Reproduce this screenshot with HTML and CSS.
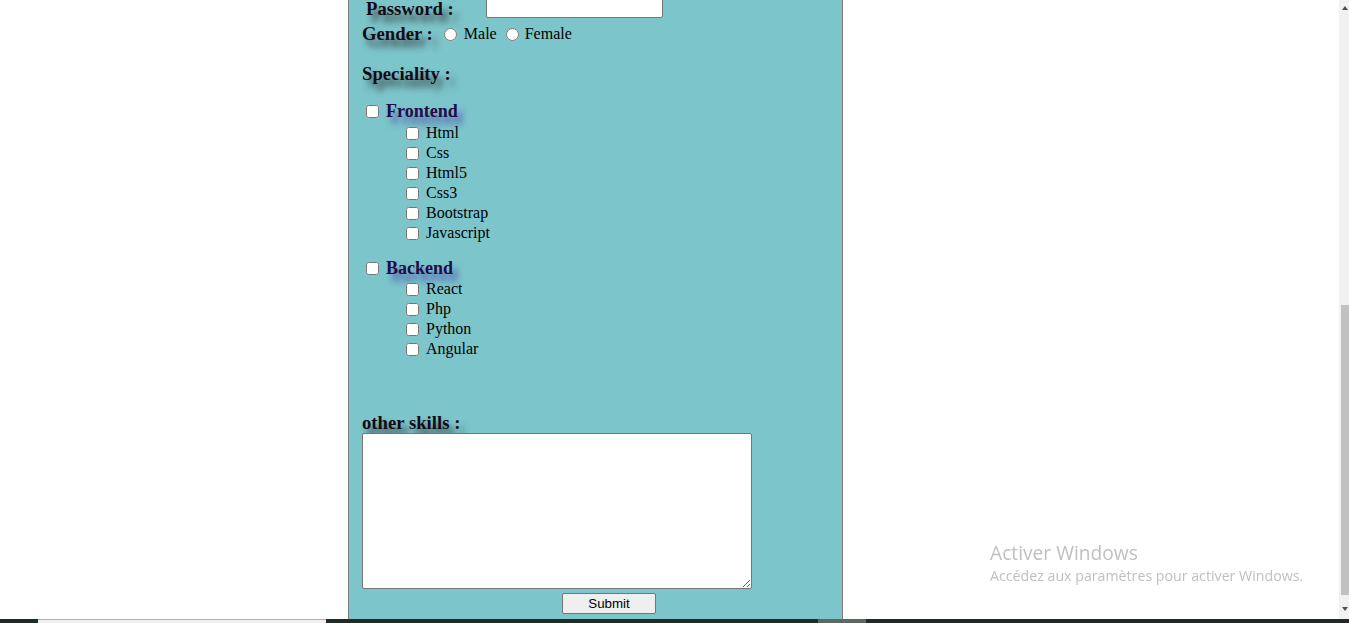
FILE: index.html
```html
<!DOCTYPE html>
<html lang="fr">
<head>
<meta charset="utf-8">
<title>Formulaire</title>
<link rel="stylesheet" href="styles.css">
</head>
<body>
<main class="page">
  <form class="form-box">
    <div class="row row-password">
      <label class="lbl lbl-pass">Password :</label>
      <input class="pass-input" type="password">
    </div>
    <div class="row row-gender">
      <span class="lbl">Gender :</span>
      <input class="radio radio-male" type="radio" name="g"><span class="opt">Male</span>
      <input class="radio radio-female" type="radio" name="g"><span class="opt">Female</span>
    </div>
    <div class="row row-spec"><span class="lbl">Speciality :</span></div>

    <div class="row group-head group-front">
      <input class="cb" type="checkbox"><span class="group-lbl">Frontend</span>
    </div>
    <div class="sub-list sub-front">
      <div class="row sub"><input class="cb" type="checkbox"><span class="opt">Html</span></div>
      <div class="row sub"><input class="cb" type="checkbox"><span class="opt">Css</span></div>
      <div class="row sub"><input class="cb" type="checkbox"><span class="opt">Html5</span></div>
      <div class="row sub"><input class="cb" type="checkbox"><span class="opt">Css3</span></div>
      <div class="row sub"><input class="cb" type="checkbox"><span class="opt">Bootstrap</span></div>
      <div class="row sub"><input class="cb" type="checkbox"><span class="opt">Javascript</span></div>
    </div>

    <div class="row group-head group-back">
      <input class="cb" type="checkbox"><span class="group-lbl">Backend</span>
    </div>
    <div class="sub-list sub-back">
      <div class="row sub"><input class="cb" type="checkbox"><span class="opt">React</span></div>
      <div class="row sub"><input class="cb" type="checkbox"><span class="opt">Php</span></div>
      <div class="row sub"><input class="cb" type="checkbox"><span class="opt">Python</span></div>
      <div class="row sub"><input class="cb" type="checkbox"><span class="opt">Angular</span></div>
    </div>

    <div class="row row-skills"><span class="lbl">other skills :</span></div>
    <textarea class="skills"></textarea>
    <div class="submit-row"><button type="button" class="submit">Submit</button></div>
  </form>
</main>

<div class="scrollbar">
  <span class="arrow arrow-up"></span>
  <span class="thumb"></span>
  <span class="arrow arrow-down"></span>
</div>

<div class="watermark">
  <div class="wm-title">Activer Windows</div>
  <div class="wm-sub">Accédez aux paramètres pour activer Windows.</div>
</div>

<div class="taskbar">
  <span class="tb-light"></span>
  <span class="tb-mid"></span>
</div>
</body>
</html>
```

FILE: styles.css
```css
html, body {
  margin: 0;
  padding: 0;
  height: 100%;
  overflow: hidden;
  background: #ffffff;
}

body {
  font-family: "Liberation Serif", "Times New Roman", serif;
  font-size: 16px;
  color: #000;
}

.page {
  width: 1339px;
}

.form-box {
  margin: -3px 0 0 348px;
  width: 480px;
  height: 640px;
  padding: 0 0 0 13px;
  background: #7cc5cb;
  border-left: 1px solid #7a7a7a;
  border-right: 1px solid #7a7a7a;
  display: flex;
  flex-direction: column;
}

.row {
  display: flex;
  align-items: center;
  height: 20px;
}

.lbl {
  font-weight: bold;
  font-size: 18.72px;
  color: #140a14;
  text-shadow: 5px 7px 6px rgba(50, 50, 50, 0.85);
  white-space: nowrap;
}

.row-password {
  height: 21px;
}

.lbl-pass {
  margin-left: 4px;
  padding-top: 2px;
  width: 120px;
}

.pass-input {
  box-sizing: border-box;
  width: 177px;
  height: 21px;
  margin: 0;
  padding: 1px 2px;
  border: 1px solid #767676;
  border-radius: 2px;
  background: #fff;
}

.row-gender {
  margin-top: 6px;
}

.radio {
  width: 13px;
  height: 13px;
  margin: 0;
}

.radio-male {
  margin-left: 11px;
  margin-right: 7px;
}

.radio-female {
  margin-left: 9px;
  margin-right: 6px;
}

.opt {
  font-size: 16px;
  color: #000;
}

.row-spec {
  margin-top: 20px;
}

.cb {
  width: 13px;
  height: 13px;
  margin: 0 7px 0 0;
}

.group-head {
  padding-left: 4px;
}

.group-front {
  margin-top: 17px;
}

.group-back {
  margin-top: 15px;
}

.group-lbl {
  font-weight: bold;
  font-size: 18px;
  color: #240a48;
  text-shadow: 5px 7px 6px rgba(80, 80, 170, 0.85);
}

.sub-list {
  display: flex;
  flex-direction: column;
}

.sub-front {
  margin-top: 2px;
}

.sub-back {
  margin-top: 1px;
}

.sub {
  padding-left: 44px;
}

.row-skills {
  margin-top: 54px;
}

.skills {
  box-sizing: border-box;
  display: block;
  width: 390px;
  height: 156px;
  margin: 0;
  border: 1px solid #767676;
  border-radius: 2px;
  background: #fff;
  resize: both;
}

.submit-row {
  display: flex;
  padding-left: 200px;
  margin-top: 4px;
}

.submit {
  box-sizing: border-box;
  width: 94px;
  height: 21px;
  padding: 0;
  font-family: "Liberation Sans", Arial, sans-serif;
  font-size: 13.33px;
  color: #000;
  background: #efefef;
  border: 1px solid #767676;
  border-radius: 2px;
}

/* fake window scrollbar */
.scrollbar {
  position: fixed;
  top: 0;
  right: 0;
  width: 10px;
  height: 619px;
  background: #f1f1f1;
}

.thumb {
  position: absolute;
  left: 2px;
  right: 0;
  top: 305px;
  height: 290px;
  background: #c1c1c1;
}

.arrow {
  position: absolute;
  left: 3px;
  width: 0;
  height: 0;
  border-left: 3px solid transparent;
  border-right: 3px solid transparent;
}

.arrow-up {
  top: 6px;
  border-bottom: 4px solid #505050;
}

.arrow-down {
  top: 607px;
  border-top: 4px solid #505050;
}

/* activation watermark */
.watermark {
  position: fixed;
  left: 990px;
  top: 541px;
  font-family: "Open Sans", "Noto Sans", sans-serif;
  color: #c0c0c0;
}

.wm-title {
  font-size: 19.2px;
  line-height: 24px;
}

.wm-sub {
  font-size: 14.2px;
  line-height: 22px;
}

/* taskbar sliver */
.taskbar {
  position: fixed;
  left: 0;
  right: 0;
  bottom: 0;
  height: 4px;
  background: #1f2b25;
}

.tb-light {
  position: absolute;
  left: 38px;
  width: 288px;
  top: 0;
  bottom: 0;
  background: #f0f0f0;
  border-top: 1px solid #b0b0b0;
}

.tb-mid {
  position: absolute;
  left: 818px;
  width: 48px;
  top: 0;
  bottom: 0;
  background: #5b6a61;
}
```
